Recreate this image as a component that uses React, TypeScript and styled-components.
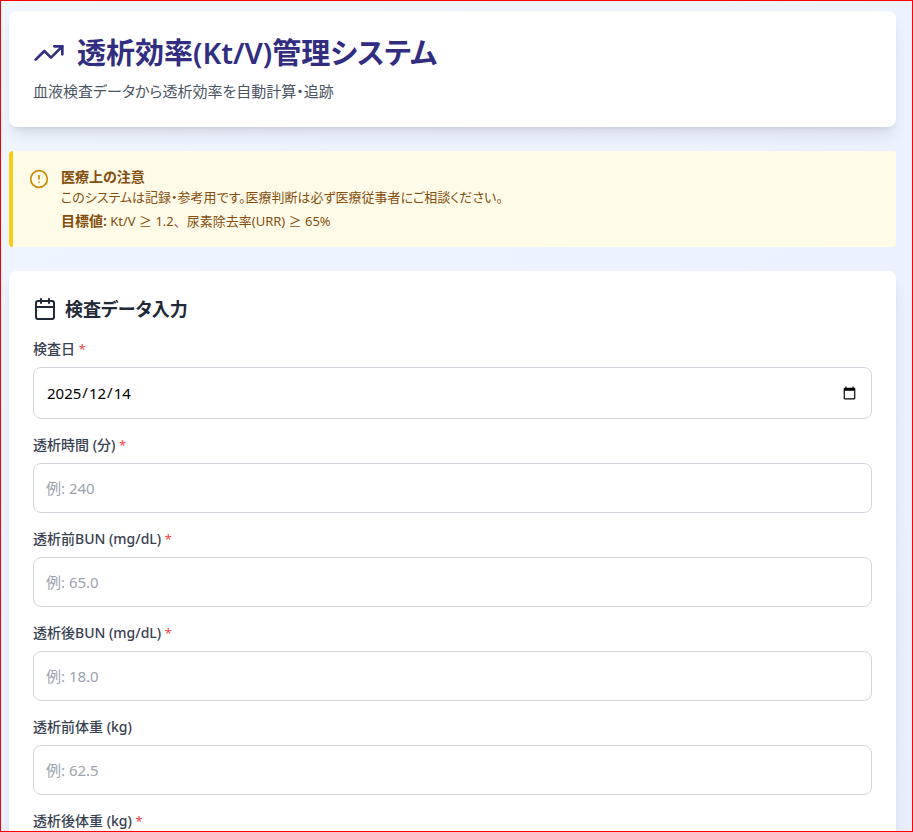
import React, { useState } from "react";
import styled, { createGlobalStyle } from "styled-components";
import { Calendar, CircleAlert, TrendingUp } from "lucide-react";

const GlobalStyle = createGlobalStyle`
  *, *::before, *::after { box-sizing: border-box; }
  body {
    margin: 0;
    font-family: "Noto Sans", "Noto Sans CJK JP", sans-serif;
    font-size: 15px;
    line-height: 24px;
    font-feature-settings: "palt";
  }
  h1, h2, p { margin: 0; }
`;

const Viewport = styled.div`
  height: 100vh;
  overflow: hidden;
  border: 1px solid #ff0000;
`;

const Page = styled.main`
  display: flex;
  flex-direction: column;
  gap: 24px;
  padding: 10px 16px 16px 8px;
  background: linear-gradient(to bottom right, #eff6ff, #e9eefe);
`;

const Card = styled.section`
  padding: 24px;
  border-radius: 8px;
  background: #ffffff;
  box-shadow: 0 10px 15px -3px rgba(0, 0, 0, 0.1), 0 4px 6px -4px rgba(0, 0, 0, 0.1);
`;

const Title = styled.h1`
  display: flex;
  align-items: center;
  gap: 12px;
  margin-bottom: 8px;
  font-size: 29px;
  line-height: 36px;
  font-weight: 600;
  color: #312e81;
`;

const Subtitle = styled.p`
  color: #4b5563;
`;

const Notice = styled.aside`
  display: flex;
  align-items: flex-start;
  gap: 12px;
  padding: 16px;
  border-left: 4px solid #facc15;
  border-radius: 4px;
  background: #fefce8;
  font-size: 13px;
  line-height: 20px;
  color: #854d0e;

  svg {
    flex-shrink: 0;
    margin-top: 2px;
    color: #ca8a04;
  }
`;

const NoticeTitle = styled.p`
  font-size: 14px;
  font-weight: 600;
`;

const NoticeTarget = styled.p`
  margin-top: 4px;
  font-feature-settings: normal;

  strong { font-size: 14px; font-weight: 600; }
`;

const SectionTitle = styled.h2`
  display: flex;
  align-items: center;
  gap: 8px;
  margin-bottom: 16px;
  font-size: 18px;
  line-height: 28px;
  font-weight: 600;
  color: #1f2937;
`;

const Form = styled.form`
  display: flex;
  flex-direction: column;
  gap: 16px;
`;

const Field = styled.div`
  display: flex;
  flex-direction: column;
  gap: 8px;
`;

const Label = styled.label`
  font-size: 14px;
  line-height: 20px;
  font-weight: 500;
  color: #374151;
`;

const Required = styled.span`
  font-size: 13px;
  font-weight: 400;
  color: #ef4444;
`;

const TextInput = styled.input`
  width: 100%;
  height: 50px;
  padding: 12px;
  border: 1px solid #d1d5db;
  border-radius: 8px;
  background: #ffffff;
  font: inherit;
  font-feature-settings: inherit;
  color: #000000;

  &::placeholder { color: #9ca3af; opacity: 1; }
  &:focus { outline: 2px solid #6366f1; }
`;

/* The date parts are placed on a grid so they read year / month / day. */
const DateInput = styled(TextInput)`
  height: 52px;

  &::-webkit-datetime-edit-fields-wrapper {
    display: inline-grid;
    grid-template-columns: repeat(5, auto);
    padding: 0;
  }
  &::-webkit-datetime-edit-year-field { grid-area: 1 / 1; }
  &::-webkit-datetime-edit-month-field { grid-area: 1 / 3; }
  &::-webkit-datetime-edit-day-field { grid-area: 1 / 5; }
  &::-webkit-datetime-edit-text { grid-row: 1; }
`;

type FieldSpec = { id: string; label: string; example: string; required?: boolean };

const fields: FieldSpec[] = [
  { id: "duration", label: "透析時間 (分)", example: "例: 240", required: true },
  { id: "pre-bun", label: "透析前BUN (mg/dL)", example: "例: 65.0", required: true },
  { id: "post-bun", label: "透析後BUN (mg/dL)", example: "例: 18.0", required: true },
  { id: "pre-weight", label: "透析前体重 (kg)", example: "例: 62.5" },
  { id: "post-weight", label: "透析後体重 (kg)", example: "", required: true },
];

function FieldLabel({ id, text, required }: { id: string; text: string; required?: boolean }) {
  return (
    <Label htmlFor={id}>
      {text} {required && <Required>*</Required>}
    </Label>
  );
}

export default function App() {
  const [date, setDate] = useState("2025-12-14");

  return (
    <Viewport lang="ja">
      <GlobalStyle />
      <Page>
        <Card as="header">
          <Title>
            <TrendingUp size={32} />
            透析効率(Kt/V)管理システム
          </Title>
          <Subtitle>血液検査データから透析効率を自動計算・追跡</Subtitle>
        </Card>

        <Notice>
          <CircleAlert size={20} />
          <div>
            <NoticeTitle>医療上の注意</NoticeTitle>
            <p>このシステムは記録・参考用です。医療判断は必ず医療従事者にご相談ください。</p>
            <NoticeTarget>
              <strong>目標値:</strong> Kt/V ≥ 1.2、尿素除去率(URR) ≥ 65%
            </NoticeTarget>
          </div>
        </Notice>

        <Card>
          <SectionTitle>
            <Calendar size={24} />
            検査データ入力
          </SectionTitle>
          <Form>
            <Field>
              <FieldLabel id="date" text="検査日" required />
              <DateInput id="date" type="date" value={date} onChange={(e) => setDate(e.target.value)} />
            </Field>
            {fields.map((field) => (
              <Field key={field.id}>
                <FieldLabel id={field.id} text={field.label} required={field.required} />
                <TextInput id={field.id} type="number" placeholder={field.example} />
              </Field>
            ))}
          </Form>
        </Card>
      </Page>
    </Viewport>
  );
}
